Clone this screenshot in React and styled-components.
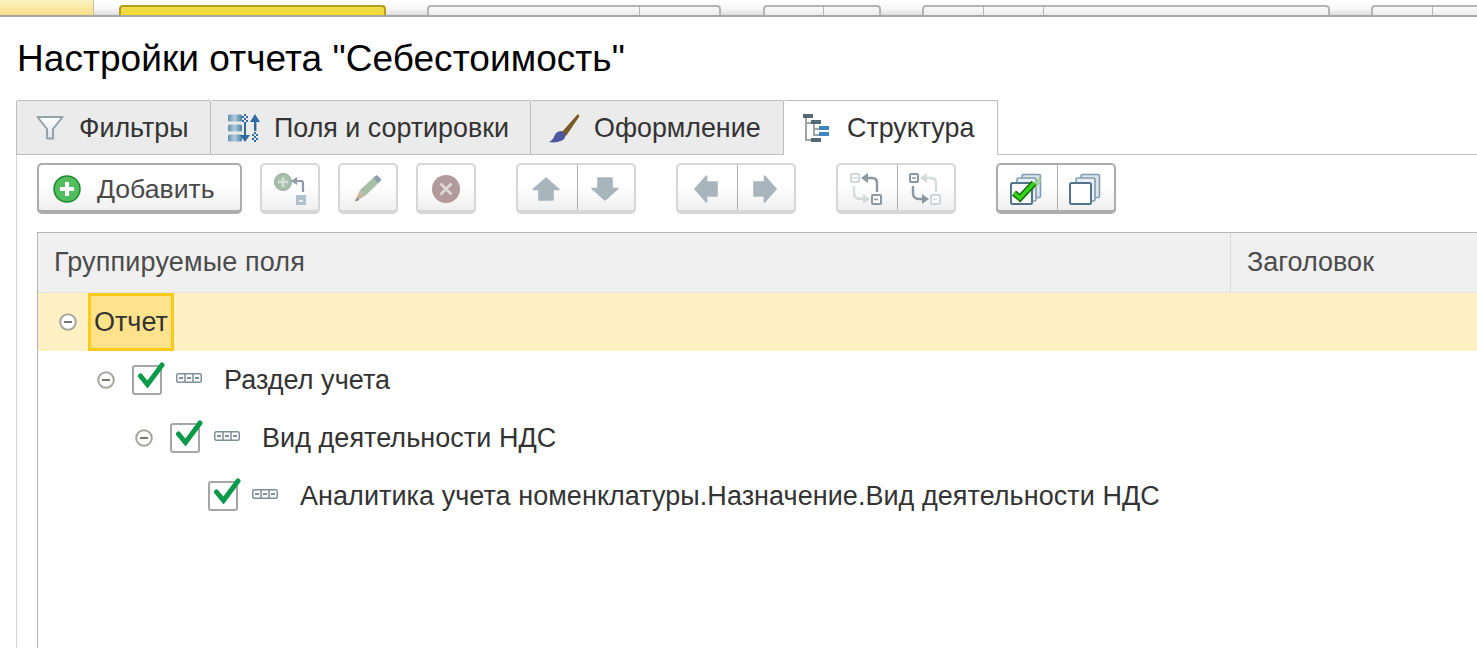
import React from "react";
import styled, { createGlobalStyle } from "styled-components";

const Global = createGlobalStyle`
  html, body { margin: 0; padding: 0; background: #fff; overflow: hidden; }
  body { font-family: "Liberation Sans", Arial, sans-serif; color: #333; }
`;

const Page = styled.div`
  width: 1477px;
  height: 648px;
  overflow: hidden;
  display: flex;
  flex-direction: column;
`;

const TopBar = styled.div`
  height: 15px;
  flex: none;
  display: flex;
  align-items: flex-end;
  background: linear-gradient(#ffffff 0%, #f8f8f8 55%, #dedede 100%);
  border-bottom: 2px solid #a6a6a6;
`;
const HomeCell = styled.div`
  width: 93px;
  height: 15px;
  flex: none;
  background: linear-gradient(#fdf3c4, #f7df86);
  border-right: 1px solid #cdbf8f;
`;
const TopGroup = styled.div`
  flex: none;
  margin-left: ${(p) => p.$gap}px;
  height: 10px;
  display: flex;
  box-sizing: border-box;
  border: 2px solid ${(p) => (p.$active ? "#b39d1b" : "#b4b4b4")};
  border-bottom: 0;
  border-radius: 4px 4px 0 0;
  background: ${(p) => (p.$active ? "linear-gradient(#f0dc50,#f3d92d)" : "linear-gradient(#fafafa,#eeeeee)")};
`;
const TopSeg = styled.div`
  width: ${(p) => p.$w}px;
  flex: none;
  box-sizing: border-box;
  & + & { border-left: 1px solid #b4b4b4; }
`;

const Title = styled.h1`
  margin: 0;
  height: 83px;
  flex: none;
  box-sizing: border-box;
  padding: 22px 0 0 17px;
  font-size: 37px;
  letter-spacing: 0.06px;
  line-height: 40px;
  font-weight: 400;
  color: #000;
`;

const TabBar = styled.div`
  display: flex;
  flex: none;
  height: 55px;
  margin-left: 16px;
  box-sizing: border-box;
  border-bottom: 1px solid #bdbdbd;
`;
const Tab = styled.div`
  flex: none;
  width: ${(p) => p.$w}px;
  height: 55px;
  box-sizing: border-box;
  display: flex;
  align-items: center;
  padding-left: ${(p) => p.$pad}px;
  gap: ${(p) => p.$gap}px;
  border: 1px solid #bdbdbd;
  border-left-width: ${(p) => (p.$first ? 1 : 0)}px;
  border-radius: 2px 2px 0 0;
  background: ${(p) => (p.$active ? "#fff" : "#ebebeb")};
  border-bottom-color: ${(p) => (p.$active ? "#fff" : "#bdbdbd")};
`;
const TabLabel = styled.span`
  font-size: 26.85px;
  color: #333;
  margin-top: 2px;
  white-space: nowrap;
`;

const Body = styled.div`
  flex: 1;
  margin-left: 16px;
  border-left: 1px solid #d4d4d4;
  padding-left: 20px;
  display: flex;
  flex-direction: column;
  min-height: 0;
`;

const Toolbar = styled.div`
  display: flex;
  flex: none;
  height: 51px;
  margin-top: 8px;
  margin-bottom: 18px;
`;
const BtnGroup = styled.div`
  flex: none;
  height: 51px;
  display: flex;
  margin-left: ${(p) => p.$gap || 0}px;
  box-sizing: border-box;
  border: 2px solid ${(p) => (p.$on ? "#acacac" : "#d6d6d6")};
  border-bottom-width: 4px;
  border-radius: 5px;
  background: linear-gradient(#ffffff 45%, #efefef 100%);
`;
const Btn = styled.div`
  flex: none;
  width: ${(p) => p.$w}px;
  display: flex;
  align-items: center;
  justify-content: center;
  box-sizing: border-box;
  padding-top: 2px;
`;
const SegBtn = styled(Btn)`
  padding-right: 3px;
  & + & {
    border-left: 1px solid ${(p) => (p.$on ? "#acacac" : "#d6d6d6")};
  }
`;
const AddBtn = styled(Btn)`
  justify-content: flex-start;
  padding-left: 14px;
  padding-top: 3px;
  gap: 16px;
  font-size: 26.6px;
  color: #4a4a4a;
`;

const Table = styled.div`
  flex: 1;
  border: 1px solid #b5b5b5;
  border-right: 0;
  border-bottom: 0;
  min-height: 0;
`;
const HeadRow = styled.div`
  display: flex;
  height: 60px;
  box-sizing: border-box;
  background: #f0f0f0;
  border-bottom: 1px solid #e4e4e4;
`;
const HeadCell = styled.div`
  box-sizing: border-box;
  width: ${(p) => p.$w}px;
  flex: none;
  display: flex;
  align-items: center;
  padding-left: 16px;
  font-size: 27px;
  letter-spacing: 0.15px;
  color: #4b4b4b;
  & + & {
    border-left: 1px solid #dcdcdc;
    letter-spacing: 0;
  }
`;

const Row = styled.div`
  display: flex;
  align-items: center;
  height: 58px;
  padding-left: ${(p) => 11 + p.$level * 38}px;
  background: ${(p) => (p.$sel ? "#fdf1c4" : "transparent")};
`;
const ToggleSlot = styled.div`
  width: 38px;
  flex: none;
  display: flex;
  justify-content: center;
`;
const Toggle = styled.svg`
  display: block;
  width: 18px;
  height: 18px;
`;
const SelCell = styled.div`
  height: 100%;
  box-sizing: border-box;
  margin-left: 1px;
  padding: 0 3px 0 3px;
  display: flex;
  align-items: center;
  font-size: 27px;
  color: #333;
  background: #fee28c;
  border: 3px solid #fcca1a;
`;
const Check = styled.div`
  position: relative;
  width: 30px;
  height: 30px;
  flex: none;
  margin-left: 7px;
  box-sizing: border-box;
  border: 2px solid #a5a5a5;
  border-radius: 3px;
  & svg { position: absolute; left: 3px; top: -5px; }
`;
const FieldIcon = styled.svg`
  display: block;
  flex: none;
  width: 26px;
  height: 10px;
  margin-left: 14px;
  margin-top: -4px;
`;
const FieldName = styled.span`
  margin-left: 22px;
  font-size: 27px;
  letter-spacing: 0.05px;
  color: #333;
  white-space: nowrap;
`;

const Funnel = () => (
  <svg width="28" height="26" viewBox="0 0 28 26">
    <defs>
      <linearGradient id="fg" x1="0" y1="0" x2="0" y2="1">
        <stop offset="0" stopColor="#fff" />
        <stop offset="1" stopColor="#dfe3e6" />
      </linearGradient>
    </defs>
    <path d="M1.5 2h25L17 14v9.5h-6V14z" fill="url(#fg)" stroke="#93a1a8" strokeWidth="2" strokeLinejoin="round" />
  </svg>
);
const Sort = () => (
  <svg width="32" height="28" viewBox="0 0 32 28">
    <defs>
      <linearGradient id="sb" x1="0" y1="0" x2="1" y2="0">
        <stop offset="0" stopColor="#5f8cb0" />
        <stop offset=".45" stopColor="#b5cddd" />
        <stop offset="1" stopColor="#4d7ea6" />
      </linearGradient>
      <pattern id="ck" width="4" height="4" patternUnits="userSpaceOnUse">
        <rect width="2" height="2" fill="#2f6b9e" />
        <rect x="2" y="2" width="2" height="2" fill="#2f6b9e" />
      </pattern>
    </defs>
    <rect x="0" y="0.5" width="14" height="7" rx="1.5" fill="url(#sb)" />
    <rect x="0" y="10.5" width="14" height="7" rx="1.5" fill="url(#sb)" />
    <rect x="0" y="20.5" width="14" height="7" rx="1.5" fill="url(#sb)" />
    <rect x="14" y="0" width="6" height="8" fill="url(#ck)" />
    <path d="M16 8h2v14h-2z" fill="#2f6b9e" />
    <path d="M12 21h10l-5 7z" fill="#2f6b9e" />
    <path d="M26 5h2.4v12H26z" fill="#2f6b9e" />
    <path d="M22 8l5-8 5 8z" fill="#2f6b9e" />
    <rect x="24" y="18" width="6" height="10" fill="url(#ck)" />
  </svg>
);
const Brush = () => (
  <svg width="32" height="32" viewBox="0 0 32 32">
    <path d="M13 21L29 3c1-1 3 0 2 2L18 24z" fill="#7a5a26" />
    <path d="M14 19c-5 0-7 3-8 6-1 2-3 4-5 5 5 1 12 0 15-3 2-2 2-5-2-8z" fill="#4a569d" />
  </svg>
);
const Tree = () => (
  <svg width="26" height="28" viewBox="0 0 26 28">
    <path d="M3 3v24M3 9h7M3 26h7M11 9v13M11 15h6M11 21h6" stroke="#a0a3a5" strokeWidth="2" fill="none" />
    <rect x="0" y="0" width="10" height="4" fill="#566874" />
    <rect x="8" y="6" width="10" height="4" fill="#566874" />
    <rect x="16" y="12" width="10" height="4" fill="#3f84bf" />
    <rect x="16" y="18" width="10" height="4" fill="#3f84bf" />
    <rect x="8" y="24" width="10" height="4" fill="#566874" />
  </svg>
);
const PlusGreen = () => (
  <svg width="28" height="28" viewBox="0 0 28 28">
    <circle cx="14" cy="14" r="13" fill="#52bd5f" stroke="#1c8a2c" strokeWidth="1.5" />
    <path d="M14 7v14M7 14h14" stroke="#fff" strokeWidth="4" />
  </svg>
);
const AddSub = () => (
  <svg width="32" height="32" viewBox="0 0 32 32">
    <circle cx="9" cy="9" r="8.5" fill="#a5bfaa" stroke="#93a99a" />
    <path d="M9 4v10M4 9h10" stroke="#d4dfd6" strokeWidth="2.5" />
    <path d="M17 8l6-4v8z" fill="#8b9aa4" />
    <path d="M21 8h6q2 0 2 2v9" stroke="#8b9aa4" strokeWidth="2.2" fill="none" />
    <rect x="22" y="22" width="10" height="10" fill="#b2bfcc" />
    <path d="M25 28h4" stroke="#fff" strokeWidth="1.5" />
  </svg>
);
const Pencil = () => (
  <svg width="28" height="27" viewBox="0 0 28 27">
    <path d="M6 15L19 3l5 5.5L11 21z" fill="#a7c0a8" />
    <path d="M19 3l3-2.5q1-.5 2 .5l3 3q.5 1-.5 2L24 8.5z" fill="#8d9eac" />
    <path d="M6 15l5 6-10 5.5z" fill="#c8b7a0" />
    <path d="M1 26.5l2-4 2.5 2.5z" fill="#8d8d7d" />
  </svg>
);
const Cancel = () => (
  <svg width="28" height="28" viewBox="0 0 28 28">
    <circle cx="14" cy="14" r="14" fill="#b39a9a" />
    <path d="M8.5 8.5l11 11M19.5 8.5l-11 11" stroke="#dedad8" strokeWidth="2.6" />
  </svg>
);
const Arrow = ({ dir }) => {
  const rot = { up: 0, down: 180, left: 270, right: 90 }[dir];
  return (
    <svg width="30" height="30" viewBox="0 0 30 30">
      <path
        transform={`rotate(${rot} 15 15)`}
        d="M15 4L28 15.5H22V26H8V15.5H2z"
        fill="#a9b5bc"
        stroke="#a9b5bc"
        strokeWidth="1.6"
        strokeLinejoin="round"
      />
    </svg>
  );
};
const Swap = ({ first }) => {
  const top = first ? "#8c98a0" : "#d5dadd";
  const low = first ? "#d5dadd" : "#8c98a0";
  const box1 = first ? "#d0d5d9" : "#8c98a0";
  const box2 = first ? "#8c98a0" : "#d0d5d9";
  return (
    <svg width="32" height="32" viewBox="0 0 32 32">
      <rect x="1" y="1" width="8" height="8" rx="1" fill="#fff" stroke={box1} strokeWidth="2" />
      <path d="M3 5h4" stroke={box1} strokeWidth="1.5" />
      <path d="M11 5l7-5v10z" fill={top} />
      <path d="M16 5h6q5 0 5 5v9" stroke={top} strokeWidth="2.4" fill="none" />
      <path d="M4 13v7q0 6 6 6h6" stroke={low} strokeWidth="2.4" fill="none" />
      <path d="M20 26l-7-5v10z" fill={low} />
      <rect x="22" y="22" width="9" height="9" rx="1" fill="#fff" stroke={box2} strokeWidth="2" />
      <path d="M24 26.5h4" stroke={box2} strokeWidth="1.5" />
    </svg>
  );
};
const Pages = ({ checked }) => (
  <svg width="32" height="32" viewBox="0 0 32 32">
    <rect x="12" y="1.5" width="18.5" height="23" rx="1.5" fill="#dbe4ea" stroke="#7f9db0" strokeWidth="1.6" />
    <rect x="7" y="5" width="19" height="23" rx="1.5" fill="#e8eef2" stroke="#7f9db0" strokeWidth="1.6" />
    {checked && <path d="M18 16L30 3l1 6-8 9z" fill="#9ccf8c" opacity=".8" />}
    <rect x="1" y="10" width="21" height="21" rx="1.5" fill="#fff" stroke="#54738c" strokeWidth="2" />
    {checked && <path d="M4 20l6 5L24 10" fill="none" stroke="#176b0c" strokeWidth="6.4" />}
    {checked && <path d="M4 20l6 5L24 10" fill="none" stroke="#37d41c" strokeWidth="3.4" />}
  </svg>
);
const Minus = () => (
  <Toggle viewBox="0 0 18 18">
    <circle cx="9" cy="9" r="7.8" fill="#fff" stroke="#a8a79f" strokeWidth="2" />
    <path d="M5 9h8" stroke="#77766f" strokeWidth="2" />
  </Toggle>
);
const Tick = () => (
  <svg width="28" height="28" viewBox="0 0 28 28">
    <path d="M3.5 14l7 8.5L25 3" fill="none" stroke="#0a9a49" strokeWidth="5" strokeLinecap="round" />
  </svg>
);
const Field = () => (
  <FieldIcon viewBox="0 0 26 10">
    <rect x=".75" y=".75" width="24.5" height="8.5" rx="1.5" fill="#fff" stroke="#7f8f9a" strokeWidth="1.5" />
    <path d="M9 1v8M17 1v8" stroke="#7f8f9a" strokeWidth="1.5" />
    <path d="M3 5h4M11 5h4M19 5h4" stroke="#7f8f9a" strokeWidth="2" />
  </FieldIcon>
);

const TreeRow = ({ level, toggle, name }) => (
  <Row $level={level}>
    <ToggleSlot>{toggle && <Minus />}</ToggleSlot>
    <Check><Tick /></Check>
    <Field />
    <FieldName>{name}</FieldName>
  </Row>
);

export default function App() {
  return (
    <Page>
      <Global />
      <TopBar>
        <HomeCell />
        <TopGroup $gap={25} $active><TopSeg $w={263} /></TopGroup>
        <TopGroup $gap={41}><TopSeg $w={210} /><TopSeg $w={80} /></TopGroup>
        <TopGroup $gap={42}><TopSeg $w={58} /><TopSeg $w={56} /></TopGroup>
        <TopGroup $gap={41}><TopSeg $w={59} /><TopSeg $w={60} /><TopSeg $w={285} /></TopGroup>
        <TopGroup $gap={41}><TopSeg $w={59} /><TopSeg $w={60} /></TopGroup>
      </TopBar>
      <Title>Настройки отчета "Себестоимость"</Title>
      <TabBar>
        <Tab $w={195} $pad={19} $gap={15} $first><Funnel /><TabLabel>Фильтры</TabLabel></Tab>
        <Tab $w={320} $pad={17} $gap={14}><Sort /><TabLabel>Поля и сортировки</TabLabel></Tab>
        <Tab $w={253} $pad={17} $gap={14}><Brush /><TabLabel>Оформление</TabLabel></Tab>
        <Tab $w={214} $pad={19} $gap={18} $active><Tree /><TabLabel>Структура</TabLabel></Tab>
      </TabBar>
      <Body>
        <Toolbar>
          <BtnGroup $on><AddBtn $w={201}><PlusGreen />Добавить</AddBtn></BtnGroup>
          <BtnGroup $gap={18}><Btn $w={56}><AddSub /></Btn></BtnGroup>
          <BtnGroup $gap={18}><Btn $w={56}><Pencil /></Btn></BtnGroup>
          <BtnGroup $gap={18}><Btn $w={56}><Cancel /></Btn></BtnGroup>
          <BtnGroup $gap={40}><SegBtn $w={59}><Arrow dir="up" /></SegBtn><SegBtn $w={57}><Arrow dir="down" /></SegBtn></BtnGroup>
          <BtnGroup $gap={40}><SegBtn $w={59}><Arrow dir="left" /></SegBtn><SegBtn $w={57}><Arrow dir="right" /></SegBtn></BtnGroup>
          <BtnGroup $gap={40}><SegBtn $w={59}><Swap first /></SegBtn><SegBtn $w={57}><Swap /></SegBtn></BtnGroup>
          <BtnGroup $gap={40} $on><SegBtn $w={59} $on><Pages checked /></SegBtn><SegBtn $w={57} $on><Pages /></SegBtn></BtnGroup>
        </Toolbar>
        <Table>
          <HeadRow>
            <HeadCell $w={1192}>Группируемые поля</HeadCell>
            <HeadCell $w={260}>Заголовок</HeadCell>
          </HeadRow>
          <Row $level={0} $sel>
            <ToggleSlot><Minus /></ToggleSlot>
            <SelCell>Отчет</SelCell>
          </Row>
          <TreeRow level={1} toggle name="Раздел учета" />
          <TreeRow level={2} toggle name="Вид деятельности НДС" />
          <TreeRow level={3} name="Аналитика учета номенклатуры.Назначение.Вид деятельности НДС" />
        </Table>
      </Body>
    </Page>
  );
}
